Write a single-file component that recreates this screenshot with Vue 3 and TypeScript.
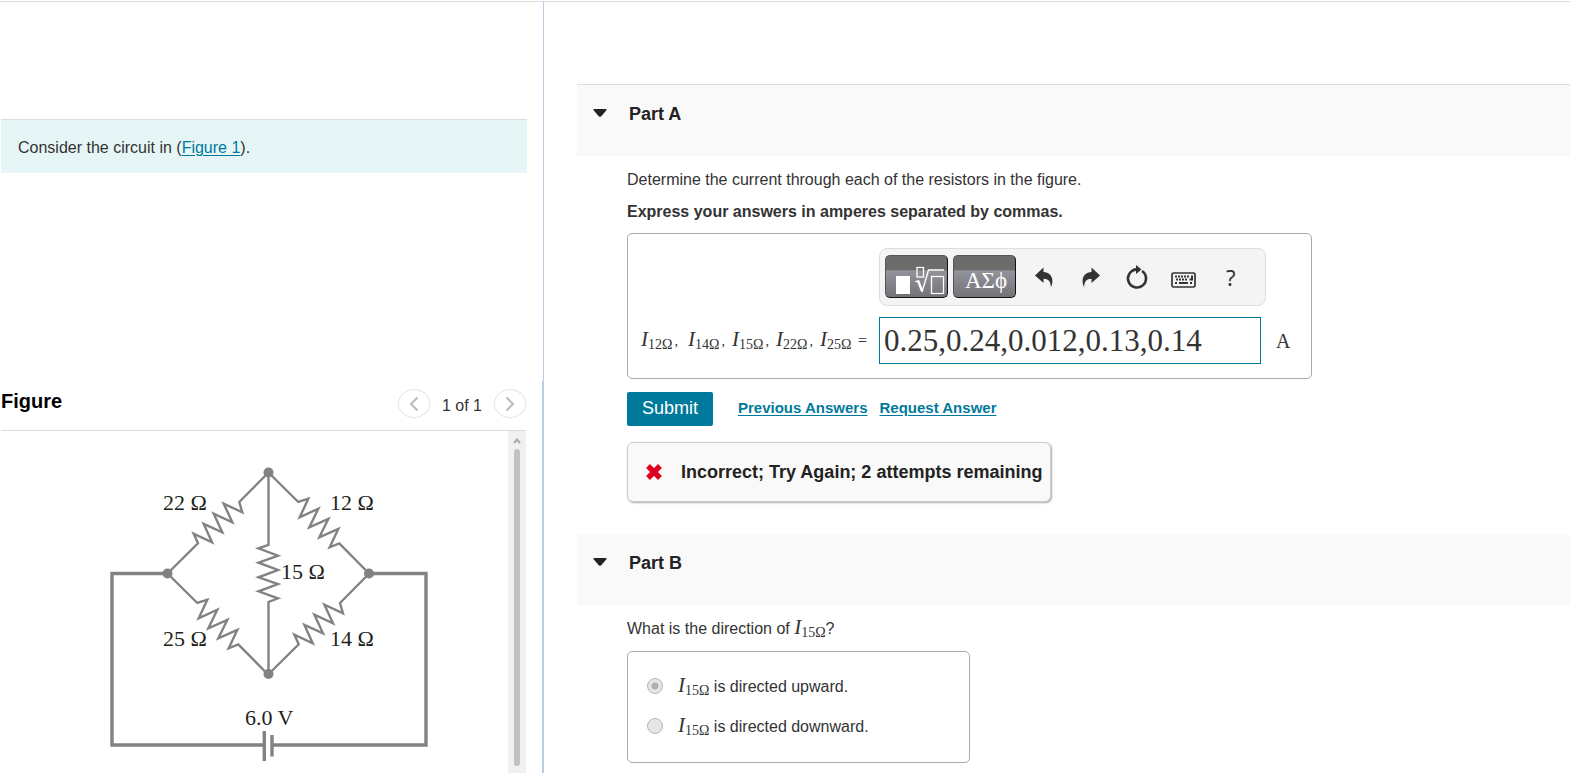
<script setup lang="ts">
import { ref } from 'vue'

interface Choice {
  id: string
  text: string
}

const resistances: number[] = [12, 14, 15, 22, 25]
const answer = ref('0.25,0.24,0.012,0.13,0.14')
const direction = ref('up')
const choices: Choice[] = [
  { id: 'up', text: 'is directed upward.' },
  { id: 'down', text: 'is directed downward.' },
]
</script>

<template>
  <div class="page">
    <aside class="left">
      <section class="intro">
        <p class="prompt">Consider the circuit in (<a href="#figure">Figure 1</a>).</p>
      </section>

      <section id="figure" class="figure">
        <header class="figure-head">
          <h2>Figure</h2>
          <nav class="pager" aria-label="Figures">
            <button type="button" class="round" aria-label="Previous figure">
              <svg width="10" height="16" viewBox="0 0 10 16"><path d="M8.500 1.500 2 8l6.500 6.500" /></svg>
            </button>
            <span>1 of 1</span>
            <button type="button" class="round" aria-label="Next figure">
              <svg width="10" height="16" viewBox="0 0 10 16"><path d="M1.500 1.500 8 8l-6.500 6.500" /></svg>
            </button>
          </nav>
        </header>
        <div class="viewer">
          <div class="canvas">
            <svg class="circuit" width="340" height="320" viewBox="100 450 340 320" role="img" aria-label="Bridge circuit">
              <g class="wire thick">
                <path d="M167.500 573.500H112V745H264M272 745H426V573.500H369" />
                <path d="M264.300 731V761M272 735V756.500" />
              </g>
              <g class="wire">
                <path d="M268.500 472.500V545L258.500 548.300 278 555.700 258.500 562.700 278 570 258.500 577.300 278 584 258.500 591.300 278 598.300 268.500 602V674" />
                <path id="rise" d="M268.500 472.500 239.300 502 242.300 512.300 223.700 503.700 232.300 522.300 213.700 513.700 222.300 532.300 203.700 524 212 542.300 193.700 533.700 198 543.300 167.500 573.500" />
                <path id="fall" d="M268.500 472.500 298.300 502 308.300 498.700 299.700 517.300 318.300 508.700 309.300 527.300 328.300 519 319.300 537.300 338.300 529 329.700 547.300 339.300 543.300 369 573.500" />
                <use href="#rise" x="100.700" y="101" />
                <use href="#fall" x="-101" y="101" />
              </g>
              <g class="node">
                <circle cx="268.500" cy="472.500" r="5" />
                <circle cx="167.500" cy="573.500" r="5" />
                <circle cx="369" cy="573.500" r="5" />
                <circle cx="268.500" cy="674" r="5" />
              </g>
              <g class="value">
                <text x="163" y="510">22 Ω</text>
                <text x="330" y="510">12 Ω</text>
                <text x="281" y="579">15 Ω</text>
                <text x="163" y="646">25 Ω</text>
                <text x="330" y="646">14 Ω</text>
                <text x="245" y="725">6.0 V</text>
              </g>
            </svg>
          </div>
          <div class="scrollbar" aria-hidden="true">
            <svg width="8" height="6" viewBox="0 0 8 6"><path d="M1 5 4 1.500 7 5" /></svg>
            <div class="thumb"></div>
          </div>
        </div>
      </section>
    </aside>

    <main class="right">
      <section class="part">
        <header class="part-head first">
          <svg width="14" height="8" viewBox="0 0 14 8"><path d="M1 0H13Q14 .5 13.200 1.400L8 7.400Q7 8.200 6 7.400L.8 1.400Q0 .5 1 0Z" /></svg>
          <h2>Part A</h2>
        </header>
        <div class="body">
          <p class="question">Determine the current through each of the resistors in the figure.</p>
          <p class="hint">Express your answers in amperes separated by commas.</p>
          <div class="answer-box">
            <div class="toolbar" role="toolbar" aria-label="Equation tools">
              <button type="button" class="palette" aria-label="Templates">
                <svg width="60" height="40" viewBox="0 0 60 40">
                  <rect x="10" y="20" width="14" height="18" fill="#fff" />
                  <g fill="none" stroke="#fff">
                    <rect x="31" y="11.500" width="6.500" height="9.500" stroke-width="1.300" />
                    <path d="M29 26 32.500 24.500" stroke-width="1.200" />
                    <path d="M32 24.500 36 35" stroke-width="2.400" />
                    <path d="M36 36 42.500 14H58" stroke-width="1.400" />
                    <rect x="45.500" y="20.500" width="12" height="17" stroke-width="1.300" />
                  </g>
                </svg>
              </button>
              <button type="button" class="palette greek">ΑΣϕ</button>
              <button type="button" class="tool" aria-label="Undo">
                <svg width="18" height="22" viewBox="0 0 18 22"><path d="M0 9.500 8.500 1.500V6C15.500 6 20 12.500 15.800 21.500C15.800 15.500 13.500 12.800 8.500 12.800V17Z" /></svg>
              </button>
              <button type="button" class="tool" aria-label="Redo">
                <svg width="18" height="22" viewBox="0 0 18 22"><path d="M18 9.500 9.500 1.500V6C2.500 6 -2 12.500 2.200 21.500C2.200 15.500 4.500 12.800 9.500 12.800V17Z" /></svg>
              </button>
              <button type="button" class="tool" aria-label="Reset">
                <svg width="24" height="26" viewBox="0 0 24 26"><path d="M17 7A9 9 0 1 1 11.500 5.500" fill="none" stroke="#333" stroke-width="2.600" /><path d="M11 1 16.500 5.500 11 10V7L8 7.500V4.500L11 4.200Z" /></svg>
              </button>
              <button type="button" class="tool" aria-label="Keyboard">
                <svg width="26" height="30" viewBox="0 0 26 30"><rect x="1" y="11" width="23" height="14" rx="1.500" fill="#f4f4f4" stroke="#333" stroke-width="1.700" /><path d="M4 14.500H18M5 17.500H17" stroke="#333" stroke-width="2" stroke-dasharray="2 1" fill="none" /><path d="M21 13.500V17.500H18.500M4 21H6M19 21H21M8 21H17" stroke="#333" stroke-width="2" fill="none" /></svg>
              </button>
              <button type="button" class="tool help" aria-label="Help">?</button>
            </div>
            <label for="currents" class="math names">
              <span v-for="(r, i) in resistances" :key="r" class="name"><i>I</i><span class="sub">{{ r }}Ω</span><span v-if="i < resistances.length - 1" class="comma">,</span></span>
              <span class="equals">=</span>
            </label>
            <input id="currents" v-model="answer" class="entry" type="text" />
            <span class="math unit">A</span>
          </div>
          <div class="actions">
            <button type="button" class="submit">Submit</button>
            <a href="#previous">Previous Answers</a>
            <a href="#request">Request Answer</a>
          </div>
          <div class="feedback" role="status">
            <svg width="18" height="18" viewBox="0 0 18 18"><path d="M3 3 15 15M15 3 3 15" stroke="#e0001f" stroke-width="5.400" /></svg>
            <strong>Incorrect; Try Again; 2 attempts remaining</strong>
          </div>
        </div>
      </section>

      <section class="part">
        <header class="part-head">
          <svg width="14" height="8" viewBox="0 0 14 8"><path d="M1 0H13Q14 .5 13.200 1.400L8 7.400Q7 8.200 6 7.400L.8 1.400Q0 .5 1 0Z" /></svg>
          <h2>Part B</h2>
        </header>
        <div class="body">
          <p class="question">What is the direction of <span class="math"><i>I</i><span class="sub">15Ω</span></span>?</p>
          <div class="choices" role="radiogroup" aria-label="Direction">
            <label v-for="c in choices" :key="c.id" class="choice">
              <input v-model="direction" type="radio" name="direction" :value="c.id" />
              <span><span class="math"><i>I</i><span class="sub">15Ω</span></span> {{ c.text }}</span>
            </label>
          </div>
        </div>
      </section>
    </main>
  </div>
</template>

<style>
body {
  background: #fff;
}
</style>

<style scoped>
* {
  box-sizing: border-box;
}

.page {
  display: grid;
  grid-template-columns: 544fr 1026fr;
  height: 100vh;
  overflow: hidden;
  border-top: 1px solid #fff;
  box-shadow: inset 0 1px #ddd;
  color: #333;
  font: 16px/20px "Liberation Sans", Arial, sans-serif;
}

h2,
p {
  margin: 0;
}

button {
  padding: 0;
  font-family: inherit;
}

a {
  color: #007a9c;
  text-underline-offset: 2px;
}

.left {
  display: grid;
  grid-template: 380px 1fr / 1fr;
  min-height: 0;
}

.intro {
  padding: 118px 16px 0 1px;
  border-right: 1px solid #b9cce0;
}

.prompt {
  padding: 18px 17px 15px;
  border-top: 1px solid #ddd;
  background: #e6f6f7;
}

.figure {
  display: flex;
  flex-direction: column;
  min-height: 0;
  padding: 0 16px 0 1px;
  border-right: 2px solid #b9cce0;
}

.figure-head {
  display: flex;
  justify-content: space-between;
  height: 50px;
  border-bottom: 1px solid #ddd;
}

.figure-head h2 {
  padding-top: 8px;
  color: #000;
  font-size: 20px;
  line-height: 24px;
}

.pager {
  display: flex;
  align-items: flex-start;
  gap: 12px;
  padding-top: 8px;
}

.pager span {
  padding-top: 7px;
}

.round {
  display: grid;
  place-items: center;
  width: 32px;
  height: 29px;
  border: 1px solid #e4e4e4;
  border-radius: 50%;
  background: #fff;
}

.round path {
  fill: none;
  stroke: #bbb;
  stroke-width: 2;
}

.viewer {
  display: flex;
  flex: 1;
  min-height: 0;
}

.canvas {
  flex: 1;
  overflow: hidden;
  padding: 19px 0 0 99px;
}

.circuit {
  display: block;
}

.wire {
  fill: none;
  stroke: #808284;
  stroke-width: 2.400;
}

.thick {
  stroke-width: 3.400;
}

.node {
  fill: #808284;
}

.value {
  fill: #231f20;
  font: 22px "Liberation Serif", "Times New Roman", serif;
}

.scrollbar {
  display: flex;
  flex-direction: column;
  align-items: center;
  gap: 5px;
  width: 18px;
  padding: 7px 0;
  background: #f0f0f0;
}

.scrollbar path {
  fill: none;
  stroke: #aaa;
  stroke-width: 2;
}

.thumb {
  flex: 1;
  width: 6px;
  border-radius: 3px;
  background: #c1c1c1;
}

.right {
  min-width: 0;
  padding: 83px 0 0 33px;
}

.part-head {
  display: flex;
  gap: 22px;
  height: 71px;
  padding: 19px 16px 0;
  background: #f9f9f9;
}

.part-head.first {
  height: 72px;
  border-top: 1px solid #ddd;
}

.part-head svg {
  margin-top: 5px;
  fill: #222;
}

.part-head h2 {
  color: #222;
  font-size: 18px;
  line-height: 20px;
}

.body {
  padding: 14px 16px 0 50px;
}

.question {
  line-height: 20px;
}

.hint {
  margin-top: 12px;
  font-weight: bold;
}

.answer-box {
  display: grid;
  grid-template-columns: auto 382px 1fr;
  align-items: center;
  gap: 11px 0;
  width: 685px;
  max-width: 100%;
  margin-top: 11px;
  padding: 14px 13px;
  border: 1px solid #aaa;
  border-radius: 5px;
}

.toolbar {
  display: flex;
  grid-column: 2 / 4;
  align-items: center;
  width: 387px;
  height: 58px;
  padding: 0 11px 0 5px;
  border: 1px solid #ddd;
  border-radius: 8px;
  background: #f4f4f4;
}

.palette {
  flex: none;
  width: 63px;
  height: 43px;
  margin: 0 5px 2px 0;
  border: 1px solid #111;
  border-top-color: #555;
  border-left-color: #555;
  border-radius: 5px;
  background: linear-gradient(#6c6c6c 0 34%, #93939b 36%, #737377);
  color: #fff;
}

.palette svg {
  display: block;
}

.greek {
  padding: 9px 0 0 3px;
  font: 23px/24px "Liberation Serif", serif;
}

.tool {
  display: grid;
  flex: 1;
  place-items: center;
  height: 44px;
  border: 0;
  background: none;
  color: #333;
}

.tool svg {
  fill: #333;
}

.help {
  font-family: "Noto Sans", sans-serif;
  font-size: 22px;
}

.math {
  font-family: "Liberation Serif", "Times New Roman", serif;
}

.math i {
  font-size: 21px;
  line-height: 0;
}

.sub {
  position: relative;
  top: 3px;
  font-size: 14px;
  line-height: 0;
}

.names {
  display: flex;
  width: 238px;
  padding-top: 2px;
  white-space: nowrap;
}

.name {
  width: 44px;
}

.name:first-child {
  width: 47px;
}

.name:nth-child(5) {
  width: 38px;
}

.comma {
  margin-left: 2px;
  font-size: 14px;
}

.entry {
  width: 100%;
  height: 47px;
  padding: 0 4px;
  border: 1px solid #007a9c;
  outline: 0;
  color: #333;
  font: 31px "Liberation Serif", "Times New Roman", serif;
}

.unit {
  padding-left: 15px;
  font-size: 20px;
}

.actions {
  display: flex;
  gap: 12px;
  margin-top: 13px;
}

.actions a {
  padding-top: 6px;
  font-size: 15px;
  font-weight: bold;
}

.submit {
  width: 86px;
  height: 34px;
  margin-right: 13px;
  padding-bottom: 2px;
  border: 0;
  border-radius: 2px;
  background: #007a9c;
  color: #fff;
  font-size: 18px;
}

.feedback {
  display: inline-flex;
  align-items: center;
  gap: 18px;
  height: 60px;
  margin: 16px 0 32px;
  padding: 0 8px 0 17px;
  border: 1px solid #ccc;
  border-radius: 6px;
  background: #f9f9f9;
  box-shadow: 1px 1px 2px #aaa;
  color: #222;
  font-size: 18px;
}

.choices {
  display: flex;
  flex-direction: column;
  gap: 20px;
  width: 343px;
  margin-top: 12px;
  padding: 25px 19px;
  border: 1px solid #aaa;
  border-radius: 5px;
}

.choice {
  display: flex;
  gap: 15px;
  height: 20px;
}

.choice input {
  flex: none;
  width: 16px;
  height: 16px;
  margin: 1px 0 0;
  border: 1px solid #b5b5b5;
  border-radius: 50%;
  background: #e6e6e6;
  appearance: none;
}

.choice input:checked {
  background: radial-gradient(#b0b0b0 0 3px, #e6e6e6 4px);
}
</style>
